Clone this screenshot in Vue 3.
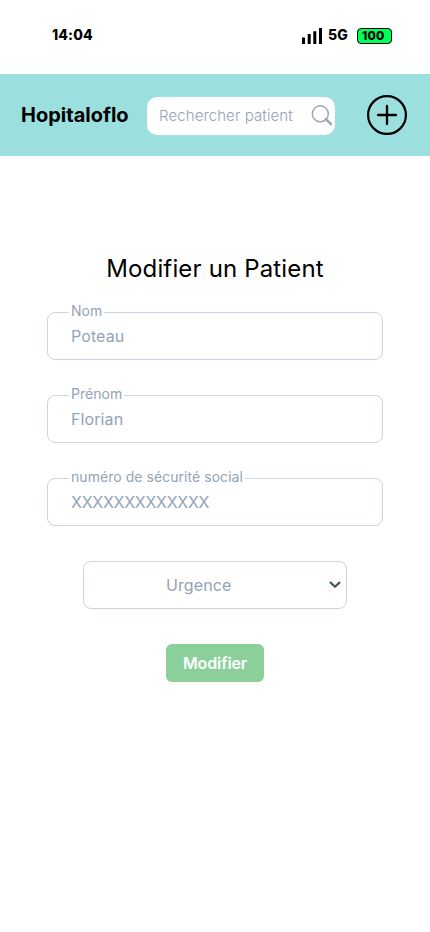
<script setup>
import { ref } from 'vue'

const fields = ref([
  { id: 'nom', label: 'Nom', value: 'Poteau' },
  { id: 'prenom', label: 'Prénom', value: 'Florian' },
  { id: 'secu', label: 'numéro de sécurité social', value: 'XXXXXXXXXXXXX' },
])
</script>

<template>
  <div class="screen">
    <div class="status">
      <span class="time">14:04</span>
      <div class="indicators">
        <svg class="signal" width="20" height="16" viewBox="0 0 20 16">
          <path d="M0 9.5h3V16H0zM5.7 6h3v10h-3zM11.3 3.3h3V16h-3zM17 0h3v16h-3z" />
        </svg>
        <span class="network">5G</span>
        <span class="battery">100</span>
      </div>
    </div>

    <header class="header">
      <span class="brand">Hopitaloflo</span>
      <div class="search">
        <span class="search-text">Rechercher patient</span>
        <svg class="search-icon" width="22" height="22" viewBox="0 0 22 22" fill="none" stroke="#94a3b8">
          <circle cx="9.3" cy="8.8" r="8" stroke-width="1.4" />
          <path d="M14.9 14.2l5 4.9" stroke-width="2.5" stroke-linecap="round" />
        </svg>
      </div>
      <svg class="add" width="40" height="40" viewBox="0 0 40 40" fill="none" stroke="#000">
        <circle cx="20" cy="20" r="18.9" stroke-width="2.2" />
        <path d="M20 11v18M11 20h18" stroke-width="2.3" stroke-linecap="round" />
      </svg>
    </header>

    <main class="content">
      <h1 class="title">Modifier un Patient</h1>
      <form class="form">
        <div v-for="field in fields" :key="field.id" class="field">
          <span class="label">{{ field.label }}</span>
          <span class="value" :class="{ code: field.id === 'secu' }">{{ field.value }}</span>
        </div>
        <div class="select">
          <span class="select-text">Urgence</span>
          <svg class="chevron" width="12" height="8" viewBox="0 0 12 8" fill="none" stroke="#475569">
            <path d="M1.6 1.6L6 5.8l4.4-4.2" stroke-width="2.2" stroke-linecap="round" stroke-linejoin="round" />
          </svg>
        </div>
        <button class="submit" type="button">Modifier</button>
      </form>
    </main>
  </div>
</template>

<style>
body {
  background: #fff;
}
</style>

<style scoped>
.screen {
  box-sizing: border-box;
  width: 430px;
  height: 932px;
  overflow: hidden;
  background: #fff;
  color: #000;
  font-family: Inter, sans-serif;
}
.status {
  box-sizing: border-box;
  display: flex;
  justify-content: space-between;
  align-items: flex-start;
  height: 74px;
  padding: 26px 38px 0 52px;
  font-size: 14px;
  font-weight: 800;
  line-height: 18px;
}
.time {
  letter-spacing: 0.15px;
}
.indicators {
  display: flex;
  align-items: center;
}
.signal {
  margin-top: 2px;
  margin-right: 6px;
}
.network {
  width: 20px;
  margin-right: 9px;
}
.battery {
  box-sizing: border-box;
  width: 35px;
  height: 16px;
  margin-top: 2px;
  padding-left: 4px;
  border: 1px solid #000;
  border-radius: 4px;
  background: #00ff57;
  font-size: 12px;
  line-height: 13px;
  letter-spacing: 0.2px;
}
.header {
  box-sizing: border-box;
  display: flex;
  align-items: center;
  height: 82px;
  padding: 0 23px 0 21px;
  background: #9bdfde;
}
.brand {
  width: 126px;
  font-size: 20px;
  font-weight: 700;
  line-height: 24px;
  white-space: nowrap;
}
.search {
  box-sizing: border-box;
  display: flex;
  align-items: center;
  justify-content: space-between;
  width: 188px;
  height: 38px;
  margin-top: 2px;
  padding: 0 2px 0 12px;
  border-radius: 10px;
  background: #fff;
  color: #94a3b8;
}
.search-text {
  font-size: 15px;
  font-weight: 300;
  line-height: 20px;
  letter-spacing: 0.1px;
  white-space: nowrap;
}
.add {
  margin-left: auto;
}
.content {
  padding-top: 98px;
}
.title {
  margin: 0;
  font-size: 24px;
  font-weight: 400;
  line-height: 30px;
  letter-spacing: 0.16px;
  text-align: center;
}
.form {
  display: flex;
  flex-direction: column;
  align-items: center;
  gap: 35px;
  margin-top: 28px;
}
.field {
  position: relative;
  box-sizing: border-box;
  display: flex;
  align-items: center;
  width: 336px;
  height: 48px;
  padding-left: 23px;
  border: 1px solid #cbd5e1;
  border-radius: 8px;
  color: #94a3b8;
}
.label {
  position: absolute;
  top: -12px;
  left: 21px;
  padding: 0 2px;
  background: #fff;
  font-size: 14px;
  line-height: 20px;
  letter-spacing: 0.05px;
  white-space: nowrap;
}
.value,
.select-text {
  font-size: 16px;
  line-height: 24px;
  letter-spacing: 0.1px;
}
.value.code {
  letter-spacing: -0.28px;
}
.select {
  box-sizing: border-box;
  display: flex;
  align-items: center;
  justify-content: space-between;
  width: 264px;
  height: 48px;
  padding: 0 5px 0 82px;
  border: 1px solid #cbd5e1;
  border-radius: 8px;
  color: #94a3b8;
}
.submit {
  width: 98px;
  height: 38px;
  padding: 0;
  border: 0;
  border-radius: 6px;
  background: #8bd09b;
  color: #fff;
  font-family: inherit;
  font-size: 16px;
  font-weight: 600;
  line-height: 24px;
  letter-spacing: -0.1px;
}
</style>
